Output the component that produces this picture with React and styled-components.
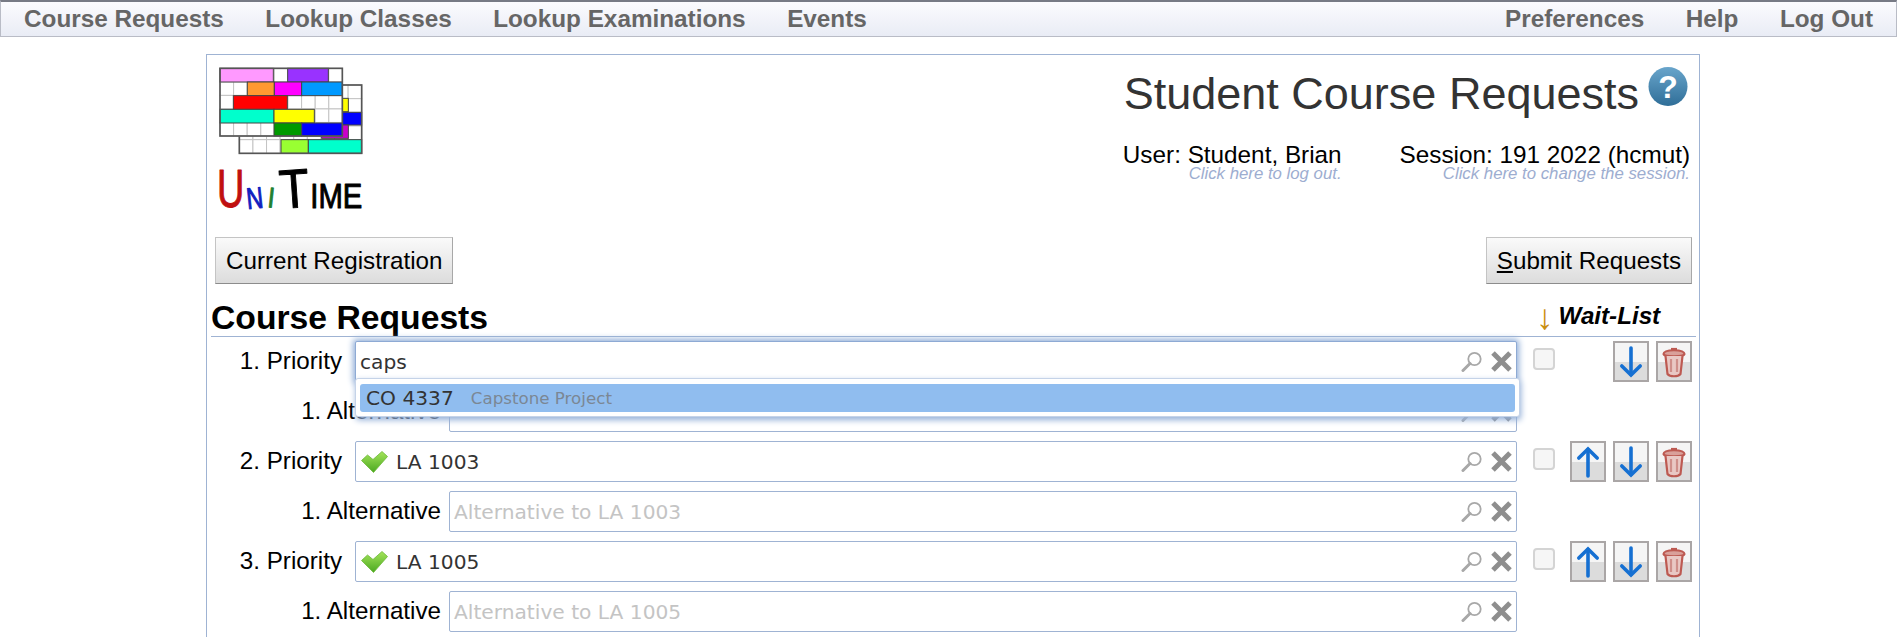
import React from "react";
import styled, { createGlobalStyle } from "styled-components";

const Global = createGlobalStyle`
  html, body { margin: 0; padding: 0; background: #fff; overflow: hidden; height: 100%; }
  body { font-family: "Liberation Sans", Arial, sans-serif; color: #000; }
`;

const Nav = styled.nav`
  box-sizing: border-box;
  height: 37px;
  display: flex;
  justify-content: space-between;
  align-items: center;
  padding: 0 23px;
  border: 1px solid #b9bcc6;
  border-top: 2px solid #777a85;
  background: linear-gradient(#fbfbfe, #e9ecf5);
`;
const NavGroup = styled.div`
  display: flex;
  gap: 41.5px;
`;
const NavLink = styled.a`
  font-size: 24.3px;
  font-weight: bold;
  color: #666;
  line-height: 30px;
`;

const Panel = styled.main`
  box-sizing: border-box;
  width: 1494px;
  height: 583px;
  margin: 17px 0 0 206px;
  border: 1px solid #9fb3d3;
  border-bottom: 0;
`;
const Header = styled.header`
  display: flex;
  justify-content: space-between;
  height: 182px;
  padding-right: 9px;
`;
const LogoSvg = styled.svg`
  width: 178px;
  height: 170px;
  display: block;
`;
const HeaderRight = styled.div`
  display: flex;
  flex-direction: column;
  align-items: flex-end;
`;
const TitleRow = styled.div`
  display: flex;
  align-items: flex-start;
  gap: 9px;
  padding-right: 2px;
  padding-top: 11px;
  height: 76px;
`;
const Title = styled.h1`
  margin: 2px 0 0;
  font-size: 45px;
  line-height: 52px;
  font-weight: normal;
  color: #333;
`;
const InfoRow = styled.div`
  display: flex;
  gap: 58px;
`;
const InfoBlock = styled.div`
  text-align: right;
`;
const InfoMain = styled.div`
  font-size: 24.3px;
  line-height: 25px;
`;
const InfoHint = styled.div`
  font-size: 16.8px;
  line-height: 14px;
  font-style: italic;
  color: #9dadd0;
`;
const ButtonBar = styled.div`
  display: flex;
  justify-content: space-between;
  padding: 0 7px 0 8px;
`;
const ActionButton = styled.button`
  box-sizing: border-box;
  height: 47px;
  padding: 0 10px;
  font: 24.2px "Liberation Sans", Arial, sans-serif;
  color: #000;
  background: linear-gradient(#fafafa, #dcdcdc);
  border: 1px solid #c4c4c4;
  border-bottom-color: #8c8c8c;
  border-right-color: #a8a8a8;
`;
const HeadingRow = styled.div`
  display: flex;
  justify-content: space-between;
  align-items: flex-end;
  height: 53px;
  margin: 0 3px 0 4px;
  border-bottom: 1px solid #9fb3d3;
  box-sizing: border-box;
`;
const Heading = styled.h2`
  margin: 0;
  font-size: 33.7px;
  line-height: 38px;
  font-weight: bold;
`;
const WaitHead = styled.div`
  display: flex;
  align-items: center;
  gap: 5px;
  width: 160px;
  height: 40px;
  font-size: 24.2px;
  font-weight: bold;
  font-style: italic;
`;
const GoldArrow = styled.span`
  color: #c98e10;
  font-style: normal;
  font-weight: normal;
  font-size: 35px;
  line-height: 1;
`;
const Rows = styled.div`
  display: flex;
  flex-direction: column;
  gap: 9.1px;
  padding-top: 4px;
`;
const Row = styled.div`
  display: grid;
  grid-template-columns: ${(p) => p.$labelWidth}px ${(p) => p.$inset}px 1fr 182px;
  height: 41px;
`;
const Label = styled.label`
  grid-column: 1;
  text-align: right;
  font-size: 24.2px;
  line-height: 40px;
`;
const Field = styled.div`
  grid-column: 3;
  position: relative;
  box-sizing: border-box;
  height: 41px;
  display: flex;
  align-items: center;
  gap: ${(p) => (p.$done ? 8 : 6)}px;
  padding: 0 3px 0 ${(p) => (p.$done ? 5 : 4)}px;
  border: 1px solid ${(p) => (p.$focused ? "#8eaad4" : "#9fb3d3")};
  border-radius: 2px;
  background: #fff;
  box-shadow: ${(p) => (p.$focused ? "0 0 6px 2px #90aed8" : "none")};
  z-index: ${(p) => (p.$focused ? 5 : "auto")};
`;
const FieldText = styled.span`
  flex: 1;
  font: 20.2px "DejaVu Sans", Verdana, sans-serif;
  color: ${(p) => (p.$placeholder ? "#c4c4c4" : "#333")};
`;
const IconPair = styled.span`
  display: flex;
  align-items: center;
  gap: 7px;
`;
const Suggest = styled.div`
  position: absolute;
  left: -1px;
  right: -4px;
  top: 36px;
  box-sizing: border-box;
  height: 39px;
  padding: 5px 4px;
  background: #fff;
  border: 1px solid #c5d3e8;
  border-radius: 3px;
  box-shadow: 1px 3px 6px #93afd8;
`;
const SuggestItem = styled.div`
  height: 28px;
  display: flex;
  align-items: center;
  gap: 17px;
  padding-left: 6px;
  border-radius: 3px;
  background: #90bdef;
`;
const SuggestCode = styled.span`
  font: 20.2px "DejaVu Sans", Verdana, sans-serif;
  color: #333;
`;
const SuggestName = styled.span`
  font: 16.7px "DejaVu Sans", Verdana, sans-serif;
  color: #7b8794;
`;
const Tools = styled.div`
  grid-column: 4;
  display: flex;
  align-items: flex-start;
  gap: 7px;
  padding-left: 16px;
`;
const Check = styled.span`
  box-sizing: border-box;
  width: 22px;
  height: 22px;
  margin: 7px 8px 0 0;
  border: 2px solid #d4d4d4;
  border-radius: 4px;
  background: #f6f6f6;
`;
const ToolButton = styled.button`
  box-sizing: border-box;
  width: 36px;
  height: 41px;
  padding: 0;
  border: 2px solid #aaa6a6;
  background: linear-gradient(#f5f5f5 52%, #dcdcdc 52%);
  display: flex;
  align-items: center;
  justify-content: center;
  visibility: ${(p) => (p.$hidden ? "hidden" : "visible")};
`;

const Logo = () => {
  const cells = [];
  for (let r = 0; r < 5; r++)
    for (let c = 0; c < 9; c++)
      cells.push(<rect key={`f${r}${c}`} x={45 + c * 40.8} y={40 + r * 40.6} width={40.8} height={40.6} fill="#fff" stroke="#c4c4c4" strokeWidth="3" />);
  const back = [];
  for (let r = 0; r < 5; r++)
    for (let c = 0; c < 9; c++)
      back.push(<rect key={`b${r}${c}`} x={103 + c * 40.8} y={90 + r * 41} width={40.8} height={41} fill="#fff" stroke="#c4c4c4" strokeWidth="3" />);
  const blocks = [
    ["#ff99ff", 45, 40, 160, 41], ["#9933ff", 248, 40, 122, 41],
    ["#ff9933", 127, 81, 81, 41], ["#ff00ff", 208, 81, 82, 41], ["#0099ff", 290, 81, 122, 41],
    ["#ff0000", 85, 122, 162, 41],
    ["#00ffcc", 45, 163, 162, 41], ["#ffff00", 207, 163, 121, 41],
    ["#009900", 207, 204, 83, 39], ["#0000ff", 290, 204, 122, 39],
  ];
  const backBlocks = [
    ["#ffff00", 412, 130, 18, 40], ["#0000ff", 412, 172, 58, 38], ["#cc00cc", 350, 210, 80, 40],
    ["#99ff33", 228, 254, 82, 41], ["#00ffcc", 310, 254, 160, 41],
  ];
  return (
    <LogoSvg viewBox="6 0 534 510" aria-label="UniTime">
      <defs>
        <filter id="soft"><feGaussianBlur stdDeviation="2" /></filter>
      </defs>
      <g filter="url(#soft)">
        {back}
        {backBlocks.map(([f, x, y, w, h]) => <rect key={`${x}${y}`} x={x} y={y} width={w} height={h} fill={f} stroke="#444" strokeWidth="3" />)}
        <rect x="103" y="90" width="367" height="205" fill="none" stroke="#555" strokeWidth="5" />
        {cells}
        {blocks.map(([f, x, y, w, h]) => <rect key={`${x}${y}`} x={x} y={y} width={w} height={h} fill={f} stroke="#444" strokeWidth="3" />)}
        <rect x="45" y="40" width="367" height="203" fill="none" stroke="#555" strokeWidth="5" />
      </g>
      <g fontFamily="'Liberation Sans', sans-serif" strokeWidth="3" strokeLinejoin="round">
        <text x="36" y="455" fontSize="160" fill="#c01010" stroke="#c01010" textLength="82" lengthAdjust="spacingAndGlyphs">U</text>
        <text x="124" y="460" fontSize="90" fill="#1020c0" stroke="#1020c0" textLength="50" lengthAdjust="spacingAndGlyphs" transform="rotate(-6 150 430)">N</text>
        <text x="189" y="457" fontSize="85" fill="#208030" stroke="#208030" textLength="20" lengthAdjust="spacingAndGlyphs" transform="rotate(6 199 430)">I</text>
        <text x="222" y="458" fontSize="165" fill="#000" textLength="90" lengthAdjust="spacingAndGlyphs" stroke="#000" transform="rotate(-4 267 400)">T</text>
        <text x="316" y="458" fontSize="105" fill="#000" stroke="#000" textLength="156" lengthAdjust="spacingAndGlyphs">IME</text>
      </g>
    </LogoSvg>
  );
};

const HelpIcon = () => (
  <svg width="40" height="41" viewBox="0 0 40 41">
    <defs>
      <linearGradient id="hg" x1="0" y1="0" x2="0" y2="1">
        <stop offset="0" stopColor="#69a5cb" />
        <stop offset="1" stopColor="#2f6e98" />
      </linearGradient>
    </defs>
    <circle cx="20" cy="20.5" r="19.5" fill="url(#hg)" />
    <text x="20" y="32" textAnchor="middle" fontSize="32" fontWeight="bold" fill="#fff" fontFamily="'Liberation Sans', sans-serif">?</text>
  </svg>
);
const CheckIcon = () => (
  <svg width="27" height="22" viewBox="0 0 27 22">
    <defs>
      <linearGradient id="cg" x1="0" y1="0" x2="0" y2="1">
        <stop offset="0" stopColor="#a4e45a" />
        <stop offset="1" stopColor="#4aa820" />
      </linearGradient>
    </defs>
    <path d="M0.5 9.5 L6.5 4 L12 8.5 L21 0.5 L26.5 5.5 L12.5 21.5 Z" fill="url(#cg)" stroke="#6cb838" strokeWidth="0.8" strokeLinejoin="round" />
  </svg>
);
const SearchIcon = () => (
  <svg width="22" height="21" viewBox="0 0 22 21">
    <circle cx="13.5" cy="8" r="6.2" fill="none" stroke="#a8a8a8" strokeWidth="1.8" />
    <path d="M9 12.5 L2 19.5" stroke="#a8a8a8" strokeWidth="3" strokeLinecap="round" />
  </svg>
);
const ClearIcon = () => (
  <svg width="23" height="21" viewBox="0 0 23 21">
    <path d="M3 2 L20 19 M20 2 L3 19" stroke="#8e8e8e" strokeWidth="5" />
  </svg>
);
const ArrowIcon = ({ up }) => (
  <svg width="24" height="32" viewBox="0 0 24 32">
    <g transform={up ? "rotate(180 12 16)" : undefined} fill="none" stroke="#1670d2" strokeWidth="3.6" strokeLinecap="round">
      <path d="M12 2 V28.5" />
      <path d="M2.8 20 L12 29 L21.2 20" />
    </g>
  </svg>
);
const TrashIcon = () => (
  <svg width="24" height="32" viewBox="0 0 24 32">
    <g fill="#e9c8c4" stroke="#bd5a52" strokeWidth="2.2">
      <path d="M9 3 H15" fill="none" />
      <path d="M1.5 8 C2 3 22 3 22.5 8 C22 11 2 11 1.5 8 Z" fill="#d9a09a" />
      <path d="M3.5 10 L5.5 28 C8 31 16 31 18.5 28 L20.5 10" />
      <path d="M9 13 V26 M15 13 V26" stroke="#cf8f8a" fill="none" />
    </g>
  </svg>
);

const FieldIcons = () => (
  <IconPair>
    <SearchIcon />
    <ClearIcon />
  </IconPair>
);

const RowTools = ({ up }) => (
  <Tools>
    <Check />
    <ToolButton $hidden={!up}><ArrowIcon up /></ToolButton>
    <ToolButton><ArrowIcon /></ToolButton>
    <ToolButton><TrashIcon /></ToolButton>
  </Tools>
);

const courses = ["LA 1003", "LA 1005"];

export default function App() {
  return (
    <>
      <Global />
      <Nav>
        <NavGroup>
          {["Course Requests", "Lookup Classes", "Lookup Examinations", "Events"].map((t) => <NavLink key={t}>{t}</NavLink>)}
        </NavGroup>
        <NavGroup>
          {["Preferences", "Help", "Log Out"].map((t) => <NavLink key={t}>{t}</NavLink>)}
        </NavGroup>
      </Nav>
      <Panel>
        <Header>
          <Logo />
          <HeaderRight>
            <TitleRow>
              <Title>Student Course Requests</Title>
              <HelpIcon />
            </TitleRow>
            <InfoRow>
              <InfoBlock>
                <InfoMain>User: Student, Brian</InfoMain>
                <InfoHint>Click here to log out.</InfoHint>
              </InfoBlock>
              <InfoBlock>
                <InfoMain>Session: 191 2022 (hcmut)</InfoMain>
                <InfoHint>Click here to change the session.</InfoHint>
              </InfoBlock>
            </InfoRow>
          </HeaderRight>
        </Header>
        <ButtonBar>
          <ActionButton>Current Registration</ActionButton>
          <ActionButton><u>S</u>ubmit Requests</ActionButton>
        </ButtonBar>
        <HeadingRow>
          <Heading>Course Requests</Heading>
          <WaitHead><GoldArrow>↓</GoldArrow>Wait-List</WaitHead>
        </HeadingRow>
        <Rows>
          <Row $labelWidth={135} $inset={13}>
            <Label>1. Priority</Label>
            <Field $focused>
              <FieldText>caps</FieldText>
              <FieldIcons />
              <Suggest>
                <SuggestItem>
                  <SuggestCode>CO 4337</SuggestCode>
                  <SuggestName>Capstone Project</SuggestName>
                </SuggestItem>
              </Suggest>
            </Field>
            <RowTools />
          </Row>
          <Row $labelWidth={234} $inset={8}>
            <Label>1. Alternative</Label>
            <Field><FieldText $placeholder /><FieldIcons /></Field>
          </Row>
          {courses.flatMap((c, i) => [
            <Row key={c} $labelWidth={135} $inset={13}>
              <Label>{i + 2}. Priority</Label>
              <Field $done><CheckIcon /><FieldText>{c}</FieldText><FieldIcons /></Field>
              <RowTools up />
            </Row>,
            <Row key={`${c}a`} $labelWidth={234} $inset={8}>
              <Label>1. Alternative</Label>
              <Field><FieldText $placeholder>Alternative to {c}</FieldText><FieldIcons /></Field>
            </Row>,
          ])}
        </Rows>
      </Panel>
    </>
  );
}
